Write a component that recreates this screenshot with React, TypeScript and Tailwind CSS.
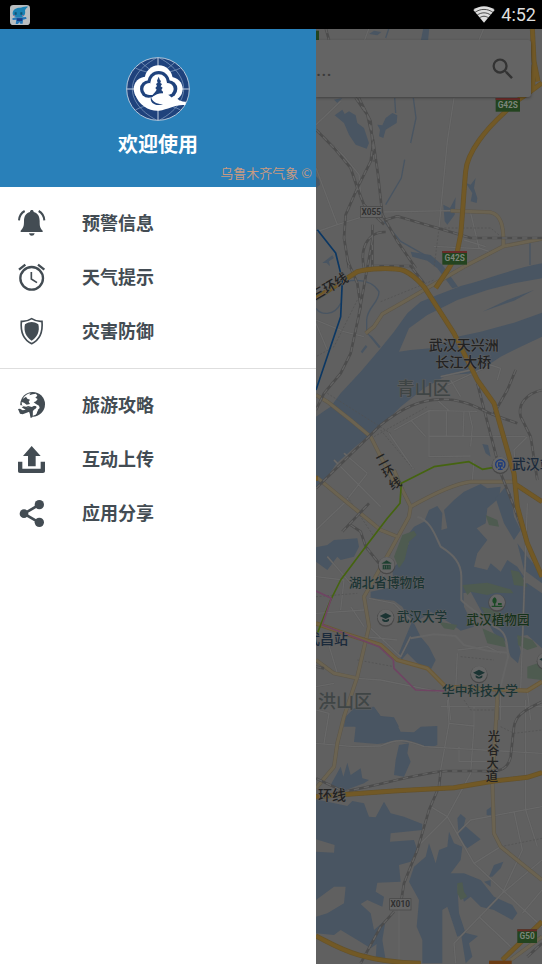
import type { ReactNode } from 'react';
import { MdSearch } from 'react-icons/md';

// [index of the map sheet, path]
type Shape = [number, string];

const SHEET = [0, 636, 1296, 2016];

const water: Shape[] = [
  [0, 'M62 262L85 245 92 258 105 250 125 262 130 285 150 300 165 345 158 362 125 350 105 320 90 285Z'],
  [0, 'M190 290L205 292 215 270 235 255 250 262 248 285 215 305 208 330 195 325 198 305Z'],
  [0, 'M328 0H346L342 40H320Z'],
  [0, 'M165 18L180 8 202 12 190 22Z'],
  [0, 'M455 465L470 470 485 450 480 480 490 510 488 525 470 520 475 495Z'],
  [0, 'M388 530L408 540 425 508 422 560 400 590 392 580Z'],
  [0, 'M60 215L85 210 70 225ZM25 705L55 682 60 690 45 700 48 715 38 705Z'],
  [0, 'M6 445L16 455 18 470 6 480Z'],
  [1, 'M290 35L350 45 385 75 432 140 415 145 370 85 340 62 295 50Z'],
  [
    1,
    'M684 70C600 85 520 118 440 138L370 165 320 185 280 220 240 275 200 325 140 395 80 460 50 500 35 510 6 530V742L45 690 130 615 200 560 260 500 330 445 400 405 480 400 500 390 560 350 620 320 684 290V218L600 248 500 275 430 290 350 325 290 330 255 335 285 265 340 225 430 180 520 150 600 130 684 115Z',
  ],
  [1, 'M505 215L580 180 660 150 600 182Z'],
  [1, 'M140 335L155 315 160 320 145 340Z'],
  [1, 'M155 275L195 325 200 320 175 290ZM505 612L522 615 530 650 515 640Z'],
  [2, 'M6 0H75L40 50 6 82Z'],
  [2, 'M6 262L40 255 60 240 130 235 135 260 120 290 80 300 70 290 40 330 6 305Z'],
  [
    2,
    'M270 240L300 200 330 185 345 150 370 138 385 160 382 210 400 205 390 150 420 120 450 95 500 72 520 85 560 80 555 115 520 145 515 190 488 205 520 240 490 280 480 320 520 330 530 310 560 335 580 300 610 320 630 350 610 375 640 370 684 400V565L640 525 610 530 620 575 612 610 590 590 575 545 540 520 505 460 470 395 448 400 450 440 480 500 440 512 410 490 350 455 330 470 300 490 320 530 345 560 365 600 350 630 310 610 280 580 262 600 255 580 275 530 292 490 265 440 240 422 170 415 170 395 240 380 235 330 265 290 285 250Z',
  ],
  [2, 'M545 115L575 80 590 100 600 170 620 210 600 240 570 190ZM610 250L640 290 684 340V370L630 330Z'],
  [2, 'M95 770L120 745 180 740 200 768 240 772 255 800H90Z'],
  [3, 'M115 30L150 28 180 22 200 50 240 55 260 95 300 97 320 80 370 78 370 135 350 143 300 130 250 125 190 132 120 126 125 80 95 62Z'],
  [3, 'M255 135L285 130 280 160 290 185 270 230 240 225 245 180Z'],
  [3, 'M50 255L80 200 88 230 100 188 110 225 140 205 145 235 165 240 150 250 90 272Z'],
  [
    3,
    'M6 298L100 318 115 303 150 310 165 350 185 352 210 305 230 340 270 350 325 372 325 390 230 400 228 425 300 420 310 450 290 485 255 495 260 545 190 548 185 575 210 590 205 620 160 600 140 612 170 640 180 690 215 660 205 720 170 745 130 720 80 690 60 705 6 700V650L40 640 90 610 95 560 60 560 6 600V455L60 458 62 435 6 418Z',
  ],
  [
    3,
    'M300 500L335 470 345 430 365 490 375 450 400 440 405 395 420 430 445 440 440 480 410 520 450 520 500 540 540 590 595 615 610 640 595 660 540 630 500 620 470 590 450 605 440 570 430 555 435 640 455 700 430 710 400 620 385 630 385 790H325L325 720 308 680 315 600 285 545Z',
  ],
  [3, 'M430 355L440 342 455 355 450 375 500 418 460 445 435 415Z'],
  [3, 'M525 530L540 495 568 485 560 505 535 530ZM510 545L530 540 530 560ZM518 330L532 320 532 347 518 345Z'],
  [3, 'M440 695L492 708 465 730 475 770 455 790ZM190 690L205 720 215 780 185 780Z'],
];

const streams: Shape[] = [
  [0, 'M242 210L245 255M298 210L306 270 290 345M272 395L262 450 215 530'],
  [0, 'M210 580L260 640 330 680 M215 30L225 0'],
  [1, 'M6 205C20 225 60 230 80 190M40 145L110 122C150 118 180 130 195 155C195 190 160 200 158 240L158 280M648 10V75'],
];

const parks: Shape[] = [
  [2, 'M265 225L300 212 308 225 285 245 272 300 255 325 240 290Z'],
  [2, 'M445 375L520 368 590 388 598 400 545 398 520 405 470 395 460 405Z'],
  [2, 'M500 440L545 450 590 480 560 490 520 475ZM505 505L570 535 575 562 520 550Z'],
  [2, 'M515 165L550 180 555 200 525 195ZM610 525L655 540 670 560 640 570 612 555ZM640 620L684 605V660L640 655Z'],
  [2, 'M375 485L430 495 420 510 390 505ZM590 330L615 335 640 380 600 375Z'],
  [3, 'M430 550L445 547 450 575 460 590 440 600 430 580Z'],
];

const minorRoads: Shape[] = [
  [0, 'M152 36L165 0M495 36L510 0M420 210L400 340 375 600M6 290L80 220M6 420L70 590 6 612M70 590L140 568M205 552L410 548M6 305L90 385 135 440 140 500M470 555L495 660 525 670M360 655L495 662'],
  [1, 'M6 240L90 275 150 290M6 250L40 330M240 570L345 512 490 514M345 512L345 650 470 648M397 512V590M450 512L447 590M345 588L635 590M290 540L335 590M225 580L300 690M90 640L160 700M410 420L440 470M380 410L470 390M400 435L530 375 560 385 550 420M370 480L405 512M640 590L600 630 605 690M465 515L475 560 470 620M515 20L450 0'],
  [2, 'M60 0L200 140M90 130L160 40M6 210L90 130M6 350L90 360 80 450M40 290L110 370M6 460L150 450M150 530L250 540M130 655L200 660 400 700 560 690M110 440L150 500M230 270L200 380M165 500L260 590 290 530M40 540L70 640M6 680L60 670M430 580L425 690M560 690V780M640 690L650 780M430 570L520 560 560 580M620 690L640 130M400 690L410 780M470 740H684M165 415L240 430 290 480M480 0L475 60'],
  [3, 'M6 130L120 140 200 138C260 110 290 125 330 140L684 160M400 0L405 70 380 210M405 70L480 78 470 220 400 350 310 440M435 185H530M435 140V185M30 130L45 40 6 30M350 320L400 350 480 490 684 680M430 400L470 360 684 320M635 0V330L670 440M600 335L625 450 565 580 420 730 425 790M480 490L560 440M565 580L684 480M255 630V790M495 650L590 740M625 640L684 570M380 20H530M480 20V80'],
];

const lakeRoads: Shape[] = [
  [2, 'M310 170C350 180 365 230 380 260C420 285 442 310 442 350V420C470 450 500 460 540 500C570 510 580 530 582 590L560 680'],
  [2, 'M290 535L360 523 425 528 450 555 520 572 580 578'],
];

const paleRoads: Shape[] = [
  [0, 'M410 548L530 553C560 560 570 590 568 655M684 632L568 655 450 716'],
  [1, 'M450 80L330 150 270 185 205 222 180 260 155 280'],
  [1, 'M6 465L40 485 110 540 170 590 200 650 245 735'],
  [2, 'M240 30L265 90 290 140 285 170 230 270 150 410 165 500 130 650 90 770 70 850 60 920 6 985'],
  [2, 'M290 140C360 100 430 70 470 65H600'],
  [2, 'M6 50L60 95 200 210 250 230M6 600L60 640 130 655'],
  [2, 'M550 690L548 780'],
  [3, 'M550 0L535 240 540 400 560 440 684 540M684 710L590 780'],
];

const ringRoads: Shape[] = [[2, 'M6 490L90 520 200 555 250 600 340 625 395 680 480 685 640 692 684 665']];

const highways: Shape[] = [
  [0, 'M655 0L660 100 672 160M660 110L655 190M684 165L650 190 600 225 570 255C520 300 460 370 455 430C450 480 446 560 440 620L428 680 405 720 365 780'],
  [1, 'M6 175L60 140 130 95C160 85 240 82 270 92C300 105 320 130 330 140L420 280 490 420 540 490 600 700 610 800 640 910 684 1010M600 730L684 785M6 715H12'],
  [3, 'M6 290L100 283 250 272 420 263 540 243 640 232 684 218M6 708C70 740 130 785 320 790M684 665L565 780'],
];

const railways: Shape[] = [
  [0, 'M35 0L45 36M125 210L160 260 178 340 192 440 205 560 250 640 305 720M6 305L60 360 110 420 130 480 150 530 210 590M178 340L170 400 130 480 95 560 90 630 105 720M135 210L170 280 180 400M215 575L250 565 370 600 470 630H684M175 590V720M150 720C135 650 170 610 215 612'],
  [1, 'M100 60L130 130 140 200 110 340 80 400 30 460 6 510M175 0L155 110 130 250M180 78H290L330 130'],
  [1, 'M6 745L200 555C270 500 320 480 380 478C450 475 500 510 540 525L610 550M490 430L560 700 600 800 650 940 684 1010M684 450C640 460 610 490 620 530L650 590 670 720M605 390L580 450 540 520'],
  [2, 'M110 195L140 215 155 260 195 310M85 215L165 130M6 620L30 625'],
  [3, 'M684 5C620 35 605 50 600 80L590 170C580 215 550 215 500 213H400C330 215 200 255 90 275L6 235M380 215L375 260 345 330 310 450 270 550 262 600M240 635L200 680 140 790M640 770L684 730'],
];

const footpaths: Shape[] = [
  [0, 'M375 600L360 720M380 600L530 600 560 625'],
  [1, 'M200 185L360 120 M40 460L230 580M130 180L60 320 6 350M200 570L300 690M180 590L340 500'],
  [2, 'M100 110L180 230M6 410L130 400M130 600L240 620M440 590L540 600'],
  [3, 'M560 80L600 100 684 90M560 440L684 415M450 0L470 30 550 30'],
];

const subways: { color: string; shapes: Shape[] }[] = [
  { color: '#0b3763', shapes: [[0, 'M10 605L65 675 85 756 80 866 6 1086']] },
  { color: '#456410', shapes: [[1, 'M540 682L505 688 465 665 360 680 262 730 258 790 220 835 140 940 80 1020 50 1080 10 1180']] },
  { color: '#6f4563', shapes: [[2, 'M6 393L52 415 25 495 195 560 238 600 240 625 305 690 390 693']] },
];

function Lines({ shapes, color, width, dash }: { shapes: Shape[]; color: string; width: number; dash?: string }) {
  return (
    <g fill="none" stroke={color} strokeWidth={width} strokeDasharray={dash} strokeLinejoin="round">
      {shapes.map(([sheet, d]) => (
        <path key={d} d={d} transform={`translate(0 ${SHEET[sheet]})`} />
      ))}
    </g>
  );
}

function Areas({ shapes, color }: { shapes: Shape[]; color: string }) {
  return (
    <g fill={color}>
      {shapes.map(([sheet, d]) => (
        <path key={d} d={d} transform={`translate(0 ${SHEET[sheet]})`} />
      ))}
    </g>
  );
}

interface Place {
  name: string;
  x: number;
  y: number;
  size: number;
  color: string;
  rotate?: number;
}

const places: Place[] = [
  { name: '武汉天兴洲', x: 344, y: 966, size: 42, color: '#222222' },
  { name: '长江大桥', x: 364, y: 1018, size: 42, color: '#222222' },
  { name: '青山区', x: 248, y: 1100, size: 54, color: '#3f4545' },
  { name: '洪山区', x: 12, y: 2039, size: 54, color: '#3f4545' },
  { name: '武汉站', x: 593, y: 1324, size: 42, color: '#1b2a3b' },
  { name: '武昌站', x: -24, y: 1848, size: 42, color: '#1b2a3b' },
  { name: '湖北省博物馆', x: 105, y: 1676, size: 38, color: '#1b3433' },
  { name: '武汉大学', x: 248, y: 1780, size: 38, color: '#1b3433' },
  { name: '武汉植物园', x: 457, y: 1789, size: 38, color: '#15321a' },
  { name: '华中科技大学', x: 384, y: 2002, size: 38, color: '#1b3433' },
  { name: '三环线', x: 2, y: 818, size: 40, color: '#222222', rotate: -30 },
  { name: '环线', x: 12, y: 2316, size: 42, color: '#222222' },
];

const verticalNames = [
  { text: '光谷大道', x: 540, y: 2140, step: 40, shift: -2, rotate: 0 },
  { text: '二环线', x: 203, y: 1308, step: 36, shift: 20, rotate: -28 },
];

const roadSigns = [
  { text: 'G42S', x: 545, y: 210, w: 73 },
  { text: 'G42S', x: 385, y: 669, w: 74 },
  { text: 'G50', x: 610, y: 2704, w: 59 },
];

const countySigns = [
  { text: 'X055', x: 140, y: 535 },
  { text: 'X010', x: 227, y: 2612 },
];

function Pin({ x, y, children }: { x: number; y: number; children: ReactNode }) {
  return (
    <g transform={`translate(${x} ${y})`}>
      <circle r="26" cy="2" fill="#484848" />
      <circle r="24" fill="#666666" />
      {children}
    </g>
  );
}

const cap = (
  <path d="M-18 -4L0 -13 18 -4 0 5ZM-10 4L0 9 10 4V10C5 15 -5 15 -10 10Z" fill="#1b3433" />
);

function CityMap() {
  return (
    <svg
      className="absolute inset-0 h-full w-full"
      viewBox="6 3 678 2805"
      preserveAspectRatio="xMinYMin slice"
      role="img"
      aria-label="地图"
    >
      <rect width="684" height="2808" fill="#606060" />
      <Areas shapes={water} color="#495562" />
      <Lines shapes={streams} color="#495562" width={4} />
      <Areas shapes={parks} color="#4e5b50" />
      <Lines shapes={minorRoads} color="#5b5b5b" width={6} />
      <Lines shapes={minorRoads} color="#686868" width={4} />
      <Lines shapes={lakeRoads} color="#656565" width={6} />
      <Lines shapes={footpaths} color="#505050" width={2} dash="6 5" />
      <Lines shapes={paleRoads} color="#5c564a" width={12} />
      <Lines shapes={paleRoads} color="#6b6351" width={9} />
      <Lines shapes={railways} color="#4c4c4c" width={8} />
      <Lines shapes={railways} color="#636363" width={4} dash="16 14" />
      <Lines shapes={ringRoads} color="#6a5836" width={13} />
      <Lines shapes={ringRoads} color="#706244" width={8} />
      <Lines shapes={highways} color="#65522a" width={15} />
      <Lines shapes={highways} color="#725926" width={11} />
      {subways.map((s) => (
        <Lines key={s.color} shapes={s.shapes} color={s.color} width={5} />
      ))}

      <Pin x={559} y={1310}>
        <path d="M-9 10A14 14 0 1 1 9 10M-5 -5H5V4H-5ZM0 4V14M-7 14H7" fill="none" stroke="#1d3b7c" strokeWidth="4" />
      </Pin>
      <Pin x={218} y={1611}>
        <path d="M-15 -6L0 -15 15 -6V-3H-15ZM-13 -1H13V14H-13ZM-7 2V11M0 2V11M7 2V11" fill="#1c3f2f" stroke="#666666" strokeWidth="2" />
      </Pin>
      <Pin x={215} y={1768}>{cap}</Pin>
      <Pin x={495} y={1938}>{cap}</Pin>
      <Pin x={549} y={1723}>
        <path d="M-7 -15C0 -12 1 0 -5 4V10H16V14H-16V10H-9V4C-17 -1 -14 -12 -7 -15ZM3 2H14V8H3Z" fill="#1c4a26" />
      </Pin>
      <Pin x={694} y={1898}>{cap}</Pin>

      <g fontFamily="'Noto Sans CJK SC', sans-serif" fontWeight="500">
        {places.map((p) => (
          <text
            key={p.name}
            x={p.x}
            y={p.y}
            fontSize={p.size}
            fill={p.color}
            stroke="#606060"
            strokeWidth="3"
            paintOrder="stroke"
            transform={p.rotate ? `rotate(${p.rotate} ${p.x} ${p.y})` : undefined}
          >
            {p.name}
          </text>
        ))}
        {verticalNames.map((v) =>
          [...v.text].map((char, i) => {
            const x = v.x + i * v.shift;
            const y = v.y + i * v.step;
            return (
              <text
                key={v.text + char}
                x={x}
                y={y}
                fontSize="37"
                fill="#222222"
                textAnchor="middle"
                transform={v.rotate ? `rotate(${v.rotate} ${x} ${y - 14})` : undefined}
              >
                {char}
              </text>
            );
          })
        )}
      </g>

      <g fontFamily="Roboto, sans-serif" fontWeight="700" fontSize="25" textAnchor="middle">
        {roadSigns.map((s) => (
          <g key={s.y}>
            <rect x={s.x} y={s.y} width={s.w} height="41" fill="#23441f" />
            <rect x={s.x} y={s.y} width={s.w} height="6" fill="#692b28" />
            <text x={s.x + s.w / 2} y={s.y + 30} fill="#7c867a">{s.text}</text>
          </g>
        ))}
        {countySigns.map((s) => (
          <g key={s.text}>
            <rect x={s.x} y={s.y} width="64" height="34" fill="#656565" stroke="#454545" strokeWidth="2" />
            <text x={s.x + 32} y={s.y + 26} fill="#303030">{s.text}</text>
          </g>
        ))}
        <rect x="525" y="2798" width="68" height="12" fill="#6b3d14" />
        <rect x="6" y="8" width="9" height="28" fill="#23441f" />
      </g>
    </svg>
  );
}

function Logo() {
  return (
    <svg className="h-16 w-16" viewBox="79 35 192 192" aria-hidden="true">
      <circle cx="175" cy="131" r="94" fill="#1f427c" stroke="#b4c6da" strokeWidth="3" />
      <g fill="none" stroke="#8ba5c6" strokeWidth="2">
        <path d="M107 68C145 88 205 88 243 68M107 194C145 172 205 172 243 194" />
        <path d="M170 38C120 65 98 100 98 131S120 197 170 224M180 38C230 65 252 100 252 131S230 197 180 224" />
        <path d="M125 52L160 80M225 52L190 80" />
      </g>
      <path d="M175 37V225M81 131H269" stroke="#c3d1e2" strokeWidth="3" />
      <g fill="#ffffff">
        <circle cx="177" cy="102" r="42" />
        <circle cx="139" cy="131" r="37" />
        <circle cx="213" cy="131" r="36" />
        <path d="M106 146C118 182 150 198 178 196C206 192 228 176 257 179L259 169C238 170 232 160 225 150Z" />
      </g>
      <g fill="#1f427c">
        <circle cx="177" cy="110" r="33" />
        <circle cx="147" cy="131" r="26" />
        <circle cx="207" cy="131" r="26" />
      </g>
      <g fill="#ffffff">
        <circle cx="177" cy="112" r="25" />
        <circle cx="149" cy="131" r="18" />
        <circle cx="204" cy="131" r="18" />
        <path d="M149 128H204V149H149Z" />
      </g>
      <path
        d="M177 94L181 105 184 106 182 113 187 116 183 123 189 127 185 134 190 139V148L166 153 153 155 167 139 171 133 167 128 172 122 169 116 174 112 172 106Z"
        fill="#1f427c"
      />
      <path d="M159 154C171 145 192 137 211 152C226 166 202 178 180 170C169 166 163 159 159 154Z" fill="#ffffff" />
      <path d="M154 154C157 168 170 177 190 176C173 184 148 175 154 154Z" fill="#1f427c" />
    </svg>
  );
}

const glyph = 'h-7 w-7 shrink-0 text-[#434c53]';

const BellIcon = (
  <svg className={glyph} viewBox="54 42 84 84" fill="currentColor" aria-hidden="true">
    <path d="M90 51C90 43 101 43 101 51C114 54 119 65 119 78C119 94 120 99 128 107V111H62V107C70 99 72 94 72 78C72 65 77 54 90 51ZM87 115H104C102 125 89 125 87 115Z" />
    <path d="M74 48C63 54 58 63 57 76M116 48C127 54 132 63 133 76" fill="none" stroke="currentColor" strokeWidth="6" />
  </svg>
);

const AlarmIcon = (
  <svg className={glyph} viewBox="54 204 84 84" fill="none" stroke="currentColor" aria-hidden="true">
    <circle cx="95" cy="250" r="34" strokeWidth="7" />
    <path d="M94 231V252L111 263" strokeWidth="5" />
    <path d="M57 224L76 209M133 224L114 209" strokeWidth="7" />
  </svg>
);

const ShieldIcon = (
  <svg className={glyph} viewBox="54 366 84 84" aria-hidden="true">
    <path d="M95 371C106 378 116 380 126 379C129 413 118 435 95 446C72 435 61 413 64 379C74 380 84 378 95 371Z" fill="none" stroke="currentColor" strokeWidth="5" />
    <path d="M95 381C101 381 108 383 115 388C120 409 112 427 95 437C78 427 70 409 75 388C82 383 89 381 95 381Z" fill="currentColor" />
  </svg>
);

const TravelIcon = (
  <svg className={glyph} viewBox="54 93 84 84" aria-hidden="true">
    <circle cx="98" cy="133" r="37" fill="currentColor" />
    <path
      d="M68 117C73 107 82 101 92 100L88 106 98 103 108 101 112 107 106 113 113 117 108 124 101 127 108 132 117 137 119 144 113 150 109 161 104 166 99 163 101 150 108 143 104 137 96 141 84 138 76 141 66 136 65 126 72 128 80 134 90 132 86 125 90 119 82 116 78 110Z"
      fill="#ffffff"
    />
    <path d="M54 136H66L86 142 70 162H54Z" fill="#ffffff" />
    <path d="M75 156L88 154 93 172 78 170 68 162ZM98 152L114 150 108 163 98 168Z" fill="#ffffff" />
    <path
      d="M54 147L60 146 68 151 77 149 65 142 71 139 91 143 103 138C110 137 112 143 106 146L98 150 97 172 92 174 88 155 68 163 60 161Z"
      fill="currentColor"
    />
  </svg>
);

const UploadIcon = (
  <svg className={glyph} viewBox="54 255 84 84" fill="currentColor" aria-hidden="true">
    <path d="M95 258L122 288H107V319H84V288H69Z" />
    <path d="M54 305H67V326H122V305H135V333C135 337 133 339 129 339H60C56 339 54 337 54 333Z" />
  </svg>
);

const ShareIcon = (
  <svg className={glyph} viewBox="54 417 84 84" fill="currentColor" aria-hidden="true">
    <path d="M118 434L72 461 118 488" fill="none" stroke="currentColor" strokeWidth="8" />
    <circle cx="118" cy="434" r="14" />
    <circle cx="72" cy="461" r="13" />
    <circle cx="118" cy="487" r="14" />
  </svg>
);

const menuGroups = [
  [
    { label: '预警信息', icon: BellIcon },
    { label: '天气提示', icon: AlarmIcon },
    { label: '灾害防御', icon: ShieldIcon },
  ],
  [
    { label: '旅游攻略', icon: TravelIcon },
    { label: '互动上传', icon: UploadIcon },
    { label: '应用分享', icon: ShareIcon },
  ],
];

function StatusBar() {
  return (
    <header className="flex h-[29px] shrink-0 items-center justify-between bg-black px-[6px]">
      <svg className="ml-1 h-5 w-5" viewBox="0 0 60 60" aria-hidden="true">
        <rect width="60" height="60" rx="10" fill="#b9bdc0" />
        <path d="M8 25C8 12 20 8 30 8C38 8 42 3 54 5C50 9 46 11 45 17C48 30 40 37 27 37C15 37 8 33 8 25Z" fill="#1b82b4" />
        <path d="M18 37H38L48 36 50 41 39 44 38 56H31L28 51 24 57H17L19 44 8 45 7 40Z" fill="#2377b8" />
        <path d="M20 40H38L36 48H21Z" fill="#173b86" />
        <path d="M14 22h6v7h-6zM31 22h6v7h-6z" fill="#135271" />
        <path d="M10 30h5v3h-5zM36 30h5v3h-5z" fill="#8d6c9c" />
      </svg>
      <div className="flex items-center gap-[6px]">
        <svg className="h-[17px] w-[22px]" viewBox="37 17 66 51" aria-hidden="true">
          <path d="M38 29C56 14 84 14 102 29L70 67Z" fill="#dedede" />
          <path d="M42 37C58 24 82 24 98 37M49 45C61 35 79 35 91 45M56 53C65 46 75 46 84 53" fill="none" stroke="#000000" strokeWidth="2" />
        </svg>
        <time className="font-[Roboto,sans-serif] text-[18px] leading-6 text-[#dedede]">4:52</time>
      </div>
    </header>
  );
}

function Drawer() {
  return (
    <aside className="w-[316px] shrink-0 bg-white">
      <div className="flex h-[158px] flex-col items-center bg-[#2980b9] pt-7">
        <Logo />
        <h1 className="mt-[9px] text-[20px] leading-7 font-bold text-white">欢迎使用</h1>
        <p className="mt-auto mr-1 mb-1 self-end text-[13px] leading-5 text-[#c79a82]">乌鲁木齐气象 ©</p>
      </div>
      <nav>
        {menuGroups.map((items, i) => (
          <ul key={i} className="border-[#dedede] pt-[9px] pb-[10px] not-last:border-b">
            {items.map((item) => (
              <li key={item.label}>
                <button
                  type="button"
                  className="flex h-[54px] w-full items-center gap-9 pl-[18px] text-left text-[18px] font-bold text-[#434c53]"
                >
                  {item.icon}
                  <span className="pb-[2px]">{item.label}</span>
                </button>
              </li>
            ))}
          </ul>
        ))}
      </nav>
    </aside>
  );
}

function SearchBar() {
  return (
    <form
      className="relative mt-[11px] mr-[11px] flex h-[57px] items-center rounded-r-[3px] bg-[#646464] pr-[14px] shadow-[0_1px_3px_rgba(0,0,0,0.35)]"
      onSubmit={(e) => e.preventDefault()}
    >
      <input
        type="text"
        aria-label="搜索"
        placeholder="..."
        className="min-w-0 flex-1 bg-transparent font-[Roboto,sans-serif] text-[20px] text-[#303030] outline-none placeholder:text-[#3a3a3a]"
      />
      <button type="submit" aria-label="搜索" className="text-[#333333]">
        <MdSearch size={28} />
      </button>
    </form>
  );
}

export default function App() {
  return (
    <div className="flex min-h-screen flex-col bg-black font-['Noto_Sans_CJK_SC',sans-serif]">
      <StatusBar />
      <div className="flex flex-1">
        <Drawer />
        <main className="relative min-w-0 flex-1 overflow-hidden bg-[#606060]">
          <CityMap />
          <SearchBar />
        </main>
      </div>
    </div>
  );
}
